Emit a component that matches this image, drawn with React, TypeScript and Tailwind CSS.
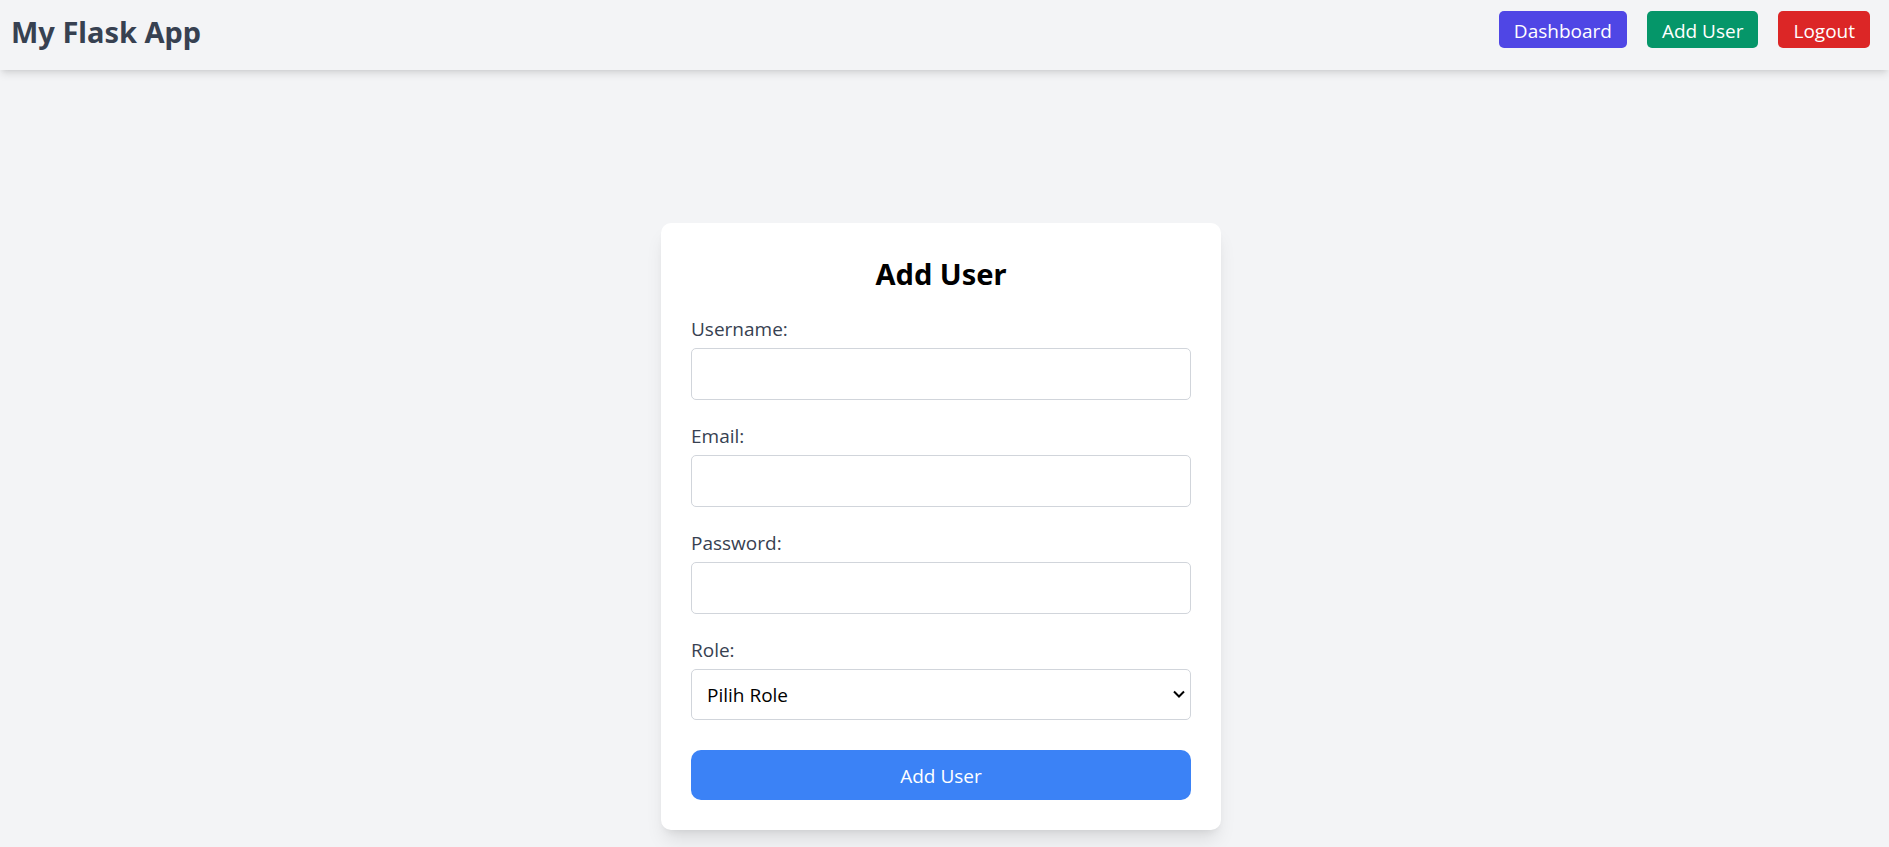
import { ChangeEvent, FormEvent, useState } from "react";

const navLinks = [
  { label: "Dashboard", href: "#dashboard", color: "bg-[#4f46e5] hover:bg-[#4338ca]" },
  { label: "Add User", href: "#add-user", color: "bg-[#059669] hover:bg-[#047857]" },
  { label: "Logout", href: "#logout", color: "bg-[#dc2626] hover:bg-[#b91c1c]" },
];

const fields = [
  { id: "username", label: "Username:", type: "text" },
  { id: "email", label: "Email:", type: "email" },
  { id: "password", label: "Password:", type: "password" },
];

function Header() {
  return (
    <header className="flex items-start justify-between pt-[11px] pr-[19px] pb-[17px] pl-[11px] shadow-[0_5px_8px_-1px_rgba(0,0,0,0.1),0_3px_5px_-3px_rgba(0,0,0,0.1)]">
      <h1 className="font-['Noto_Sans',sans-serif] text-[29px] leading-[42px] font-bold text-[#374151]">My Flask App</h1>
      <nav className="flex gap-5">
        {navLinks.map((link) => (
          <a
            key={link.label}
            href={link.href}
            className={`rounded-[5px] px-[15px] pt-[6px] pb-[2px] text-[19px] leading-[29px] text-white ${link.color}`}
          >
            {link.label}
          </a>
        ))}
      </nav>
    </header>
  );
}

function AddUserForm() {
  const [role, setRole] = useState("");

  return (
    <form
      onSubmit={(event: FormEvent) => event.preventDefault()}
      className="w-full max-w-[560px] rounded-[10px] bg-white p-[30px] shadow-[0_13px_19px_-4px_rgba(0,0,0,0.1),0_5px_8px_-5px_rgba(0,0,0,0.1)]"
    >
      <h2 className="mb-[18px] text-center font-['Noto_Sans',sans-serif] text-[29px] leading-[42px] font-bold text-black">Add User</h2>
      {fields.map((field) => (
        <div key={field.id} className="mb-5">
          <label htmlFor={field.id} className="mb-[3px] block text-[19px] leading-[32px] text-[#374151]">
            {field.label}
          </label>
          <input
            id={field.id}
            name={field.id}
            type={field.type}
            required
            className="block h-[52px] w-full rounded-[5px] border border-[#d1d5db] px-[15px] text-[19px]"
          />
        </div>
      ))}
      <div className="mb-[30px]">
        <label htmlFor="role" className="mb-[3px] block text-[19px] leading-[32px] text-[#374151]">
          Role:
        </label>
        <div className="relative">
          <select
            id="role"
            name="role"
            value={role}
            onChange={(event: ChangeEvent<HTMLSelectElement>) => setRole(event.target.value)}
            className="block h-[51px] w-full appearance-none rounded-[5px] border border-[#d1d5db] bg-white px-[15px] pt-[2px] text-[19px] text-black"
          >
            <option value="">Pilih Role</option>
            <option value="admin">Admin</option>
            <option value="user">User</option>
          </select>
          <svg
            viewBox="0 0 12 8"
            className="pointer-events-none absolute top-[21px] right-[6px] h-2 w-3"
            fill="none"
            stroke="#000"
            strokeWidth="2"
            aria-hidden="true"
          >
            <path d="M1 1.5 6 6.5 11 1.5" />
          </svg>
        </div>
      </div>
      <button
        type="submit"
        className="block h-[50px] w-full rounded-[10px] bg-[#3b82f6] pt-[2px] text-[19px] text-white hover:bg-[#2563eb]"
      >
        Add User
      </button>
    </form>
  );
}

export default function App() {
  return (
    <div className="flex min-h-screen flex-col bg-[#f3f4f6] font-['Open_Sans','Noto_Sans',sans-serif]">
      <Header />
      <main className="flex grow items-end justify-center pt-8 pr-[7px] pb-[17px]">
        <AddUserForm />
      </main>
    </div>
  );
}
